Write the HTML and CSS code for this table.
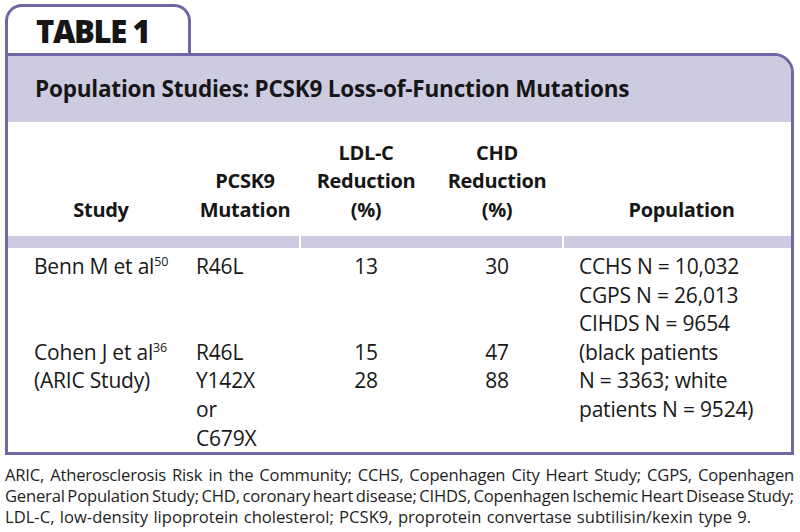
FILE: index.html
```html
<!DOCTYPE html>
<html>
<head>
<meta charset="utf-8">
<link rel="stylesheet" href="styles.css">
</head>
<body>
<div class="page">
  <div class="tab">TABLE 1</div>
  <div class="box">
    <div class="title">Population Studies: PCSK9 Loss-of-Function Mutations</div>
    <div class="grid head">
      <div class="hc">Study</div>
      <div class="hc">PCSK9<br>Mutation</div>
      <div class="hc">LDL-C<br>Reduction<br>(%)</div>
      <div class="hc">CHD<br>Reduction<br>(%)</div>
      <div class="hc pop-h">Population</div>
    </div>
    <div class="sep"><span class="s1"></span><span class="s2"></span><span class="s3"></span></div>
    <div class="grid body">
      <div class="c study">Benn M et al<sup>50</sup></div>
      <div class="c mut">R46L</div>
      <div class="c num">13</div>
      <div class="c num">30</div>
      <div class="c pop">CCHS N = 10,032<br>CGPS N = 26,013<br>CIHDS N = 9654</div>

      <div class="c study">Cohen J et al<sup>36</sup><br>(ARIC Study)</div>
      <div class="c mut">R46L<br>Y142X<br>or<br>C679X</div>
      <div class="c num">15<br>28</div>
      <div class="c num">47<br>88</div>
      <div class="c pop">(black patients<br>N = 3363; white<br>patients N = 9524)</div>
    </div>
  </div>
  <div class="notes">
    <span class="ln">ARIC, Atherosclerosis Risk in the Community; CCHS, Copenhagen City Heart Study; CGPS, Copenhagen</span>
    <span class="ln">General Population Study; CHD, coronary heart disease; CIHDS, Copenhagen Ischemic Heart Disease Study;</span>
    <span class="ln last">LDL-C, low-density lipoprotein cholesterol; PCSK9, proprotein convertase subtilisin/kexin type 9.</span>
  </div>
</div>
</body>
</html>
```
FILE: styles.css
```css
* { box-sizing: border-box; }
html, body { margin: 0; padding: 0; background: #fff; }
body {
  font-family: "Open Sans", "Noto Sans", sans-serif;
  color: #1a1a1a;
}
.page { width: 800px; height: 532px; overflow: hidden; padding: 4px 6px 0 5px; }
.tab {
  width: 186px;
  height: 49px;
  border: 3px solid #6d67a5;
  border-bottom: none;
  border-radius: 17px 17px 0 0;
  font-weight: 800;
  font-size: 31px;
  line-height: 40px;
  padding-left: 28px;
  padding-top: 4px;
  letter-spacing: -1.4px;
  color: #161616;
}
.box {
  width: 789px;
  height: 402px;
  border: 3px solid #6d67a5;
  border-top-right-radius: 20px;
  overflow: hidden;
  display: flex;
  flex-direction: column;
}
.title {
  background: #cdcbe0;
  height: 66px;
  flex: none;
  padding: 0 0 0 27px;
  font-weight: 700;
  font-size: 22.5px;
  line-height: 66px;
  letter-spacing: -0.2px;
  color: #161616;
}
.grid {
  display: grid;
  grid-template-columns: 186px 102px 140px 122px 1fr;
}
.head {
  height: 114px;
  flex: none;
  align-items: end;
  padding-bottom: 12px;
}
.hc {
  text-align: center;
  font-weight: 700;
  font-size: 20px;
  line-height: 28.5px;
  letter-spacing: -0.3px;
  color: #161616;
}
.pop-h { padding-left: 14px; }
.sep {
  display: flex;
  flex: none;
  height: 12px;
  gap: 2px;
}
.sep span { background: #cdcbe0; }
.s1 { width: 291px; }
.s2 { width: 261px; }
.s3 { flex: 1; }
.body { padding-top: 4px; }
.c {
  font-size: 21px;
  line-height: 28.6px;
  letter-spacing: -0.2px;
  color: #181818;
}
.study { padding-left: 26px; }
.mut { padding-left: 2px; }
.num { text-align: center; }
.pop { padding-left: 21px; }
sup {
  font-size: 12.5px;
  line-height: 0;
  vertical-align: 8px;
}
.notes {
  width: 789px;
  padding-top: 9px;
  font-size: 16.6px;
  line-height: 21px;
  letter-spacing: -0.2px;
  word-spacing: -2px;
  color: #1e1e1e;
}
.ln {
  display: block;
  text-align: justify;
  text-align-last: justify;
}
.ln.last {
  text-align-last: left;
  letter-spacing: 0;
  word-spacing: 1px;
}
```
